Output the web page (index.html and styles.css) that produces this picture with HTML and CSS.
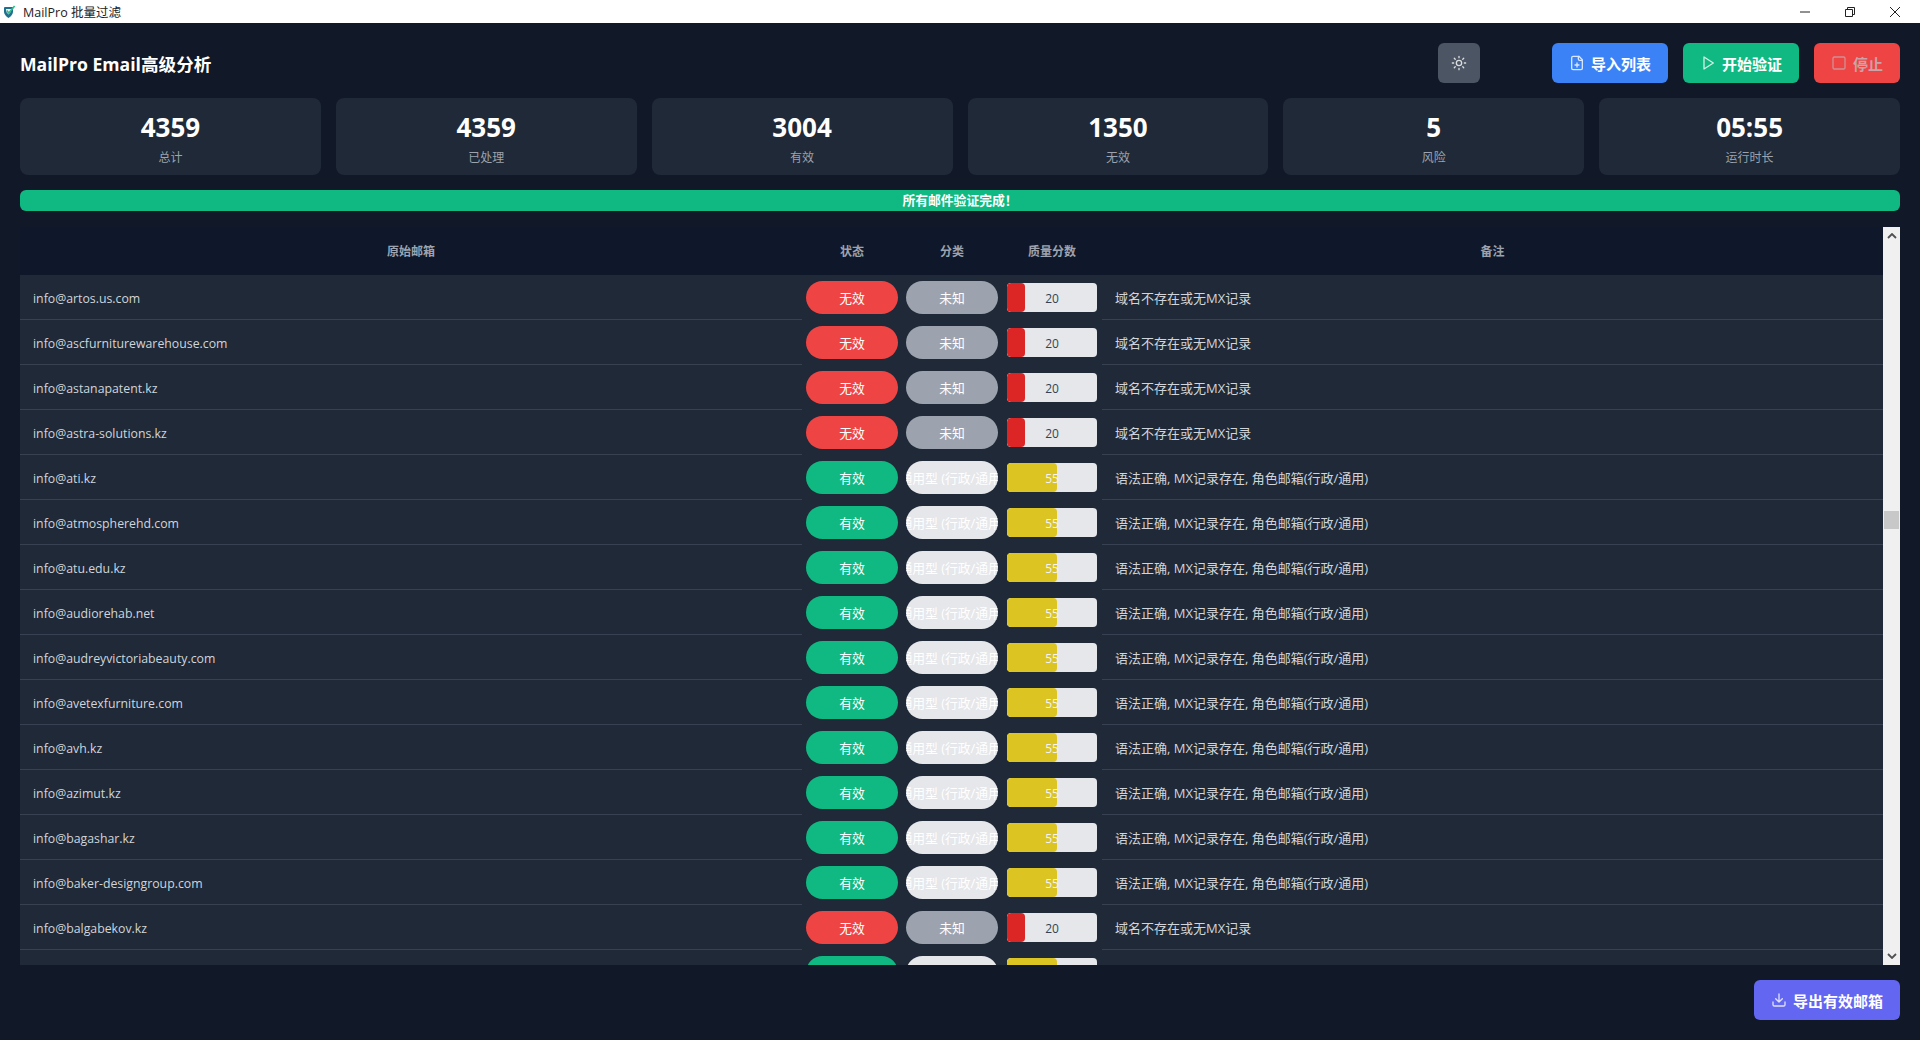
FILE: index.html
```html
<!DOCTYPE html>
<html lang="zh-CN">
<head>
    <meta charset="UTF-8">
    <title>MailPro 批量过滤</title>
    <link rel="stylesheet" href="styles.css">
</head>
<body>

    <!-- Window title bar -->
    <div class="titlebar">
        <svg class="app-icon" viewBox="0 0 14 14" width="14" height="14">
            <path d="M1 3 Q1 2 2 2 L10 2 L10 7 Q9.5 10.5 5.5 13 Q1.5 10.5 1 7 Z" fill="#1f6f8f"/>
            <path d="M3 4 L8.2 4 L7.6 7 L5.5 9.6 L3.4 7 Z" fill="#f2f8f8"/>
            <path d="M3.8 5.6 L5.8 8 L11.6 1" fill="none" stroke="#2fbf86" stroke-width="1.7"/>
        </svg>
        <span class="titlebar-text">MailPro 批量过滤</span>
        <div class="window-controls">
            <svg viewBox="0 0 12 12" width="12" height="12"><path d="M1 6 H11" stroke="#222" fill="none"/></svg>
            <svg viewBox="0 0 12 12" width="12" height="12"><path d="M1.5 3.5 H8.5 V10.5 H1.5 Z M3.5 3.5 V1.5 H10.5 V8.5 H8.5" stroke="#222" fill="none"/></svg>
            <svg viewBox="0 0 12 12" width="12" height="12"><path d="M1 1 L11 11 M11 1 L1 11" stroke="#222" fill="none"/></svg>
        </div>
    </div>

    <div class="app">
        <!-- Header -->
        <div class="header">
            <h1 class="app-title">MailPro Email高级分析</h1>
            <button class="btn btn-theme">
                <svg class="icon" viewBox="0 0 24 24"><circle cx="12" cy="12" r="4"/><path d="M12 2v2M12 20v2M4.93 4.93l1.41 1.41M17.66 17.66l1.41 1.41M2 12h2M20 12h2M6.34 17.66l-1.41 1.41M19.07 4.93l-1.41 1.41"/></svg>
            </button>
            <button class="btn btn-import">
                <svg class="icon" viewBox="0 0 24 24"><path d="M15 2H6a2 2 0 0 0-2 2v16a2 2 0 0 0 2 2h12a2 2 0 0 0 2-2V7Z"/><path d="M14 2v4a2 2 0 0 0 2 2h4"/><path d="M9 15h6M12 18v-6"/></svg>
                导入列表
            </button>
            <button class="btn btn-start">
                <svg class="icon" viewBox="0 0 24 24"><path d="M6 3l14 9-14 9V3Z"/></svg>
                开始验证
            </button>
            <button class="btn btn-stop">
                <svg class="icon" viewBox="0 0 24 24"><rect x="3" y="3" width="18" height="18" rx="2"/></svg>
                停止
            </button>
        </div>

        <!-- Stats -->
        <div class="stats">
            <div class="stat-card"><div class="stat-value">4359</div><div class="stat-label">总计</div></div>
            <div class="stat-card"><div class="stat-value">4359</div><div class="stat-label">已处理</div></div>
            <div class="stat-card"><div class="stat-value">3004</div><div class="stat-label">有效</div></div>
            <div class="stat-card"><div class="stat-value">1350</div><div class="stat-label">无效</div></div>
            <div class="stat-card"><div class="stat-value">5</div><div class="stat-label">风险</div></div>
            <div class="stat-card"><div class="stat-value">05:55</div><div class="stat-label">运行时长</div></div>
        </div>

        <div class="progress">所有邮件验证完成！</div>

        <!-- Results -->
        <div class="results">
            <div class="table-wrap">
                <table class="result-table">
                    <thead>
                        <tr>
                            <th class="col-email">原始邮箱</th>
                            <th class="col-mid">状态</th>
                            <th class="col-mid">分类</th>
                            <th class="col-mid">质量分数</th>
                            <th>备注</th>
                        </tr>
                    </thead>
                    <tbody>
                        <tr>
                            <td class="cell-email">info@artos.us.com</td>
                            <td class="cell-mid"><div class="pill pill-invalid">无效</div></td>
                            <td class="cell-mid"><div class="pill pill-unknown">未知</div></td>
                            <td class="cell-mid"><div class="score"><div class="score-fill fill-low"></div><span class="score-num">20</span></div></td>
                            <td class="cell-note">域名不存在或无MX记录</td>
                        </tr>
                        <tr>
                            <td class="cell-email">info@ascfurniturewarehouse.com</td>
                            <td class="cell-mid"><div class="pill pill-invalid">无效</div></td>
                            <td class="cell-mid"><div class="pill pill-unknown">未知</div></td>
                            <td class="cell-mid"><div class="score"><div class="score-fill fill-low"></div><span class="score-num">20</span></div></td>
                            <td class="cell-note">域名不存在或无MX记录</td>
                        </tr>
                        <tr>
                            <td class="cell-email">info@astanapatent.kz</td>
                            <td class="cell-mid"><div class="pill pill-invalid">无效</div></td>
                            <td class="cell-mid"><div class="pill pill-unknown">未知</div></td>
                            <td class="cell-mid"><div class="score"><div class="score-fill fill-low"></div><span class="score-num">20</span></div></td>
                            <td class="cell-note">域名不存在或无MX记录</td>
                        </tr>
                        <tr>
                            <td class="cell-email">info@astra-solutions.kz</td>
                            <td class="cell-mid"><div class="pill pill-invalid">无效</div></td>
                            <td class="cell-mid"><div class="pill pill-unknown">未知</div></td>
                            <td class="cell-mid"><div class="score"><div class="score-fill fill-low"></div><span class="score-num">20</span></div></td>
                            <td class="cell-note">域名不存在或无MX记录</td>
                        </tr>
                        <tr>
                            <td class="cell-email">info@ati.kz</td>
                            <td class="cell-mid"><div class="pill pill-valid">有效</div></td>
                            <td class="cell-mid"><div class="pill pill-role">通用型 (行政/通用)</div></td>
                            <td class="cell-mid"><div class="score"><div class="score-fill fill-mid"></div><span class="score-num num-light">55</span></div></td>
                            <td class="cell-note">语法正确, MX记录存在, 角色邮箱(行政/通用)</td>
                        </tr>
                        <tr>
                            <td class="cell-email">info@atmospherehd.com</td>
                            <td class="cell-mid"><div class="pill pill-valid">有效</div></td>
                            <td class="cell-mid"><div class="pill pill-role">通用型 (行政/通用)</div></td>
                            <td class="cell-mid"><div class="score"><div class="score-fill fill-mid"></div><span class="score-num num-light">55</span></div></td>
                            <td class="cell-note">语法正确, MX记录存在, 角色邮箱(行政/通用)</td>
                        </tr>
                        <tr>
                            <td class="cell-email">info@atu.edu.kz</td>
                            <td class="cell-mid"><div class="pill pill-valid">有效</div></td>
                            <td class="cell-mid"><div class="pill pill-role">通用型 (行政/通用)</div></td>
                            <td class="cell-mid"><div class="score"><div class="score-fill fill-mid"></div><span class="score-num num-light">55</span></div></td>
                            <td class="cell-note">语法正确, MX记录存在, 角色邮箱(行政/通用)</td>
                        </tr>
                        <tr>
                            <td class="cell-email">info@audiorehab.net</td>
                            <td class="cell-mid"><div class="pill pill-valid">有效</div></td>
                            <td class="cell-mid"><div class="pill pill-role">通用型 (行政/通用)</div></td>
                            <td class="cell-mid"><div class="score"><div class="score-fill fill-mid"></div><span class="score-num num-light">55</span></div></td>
                            <td class="cell-note">语法正确, MX记录存在, 角色邮箱(行政/通用)</td>
                        </tr>
                        <tr>
                            <td class="cell-email">info@audreyvictoriabeauty.com</td>
                            <td class="cell-mid"><div class="pill pill-valid">有效</div></td>
                            <td class="cell-mid"><div class="pill pill-role">通用型 (行政/通用)</div></td>
                            <td class="cell-mid"><div class="score"><div class="score-fill fill-mid"></div><span class="score-num num-light">55</span></div></td>
                            <td class="cell-note">语法正确, MX记录存在, 角色邮箱(行政/通用)</td>
                        </tr>
                        <tr>
                            <td class="cell-email">info@avetexfurniture.com</td>
                            <td class="cell-mid"><div class="pill pill-valid">有效</div></td>
                            <td class="cell-mid"><div class="pill pill-role">通用型 (行政/通用)</div></td>
                            <td class="cell-mid"><div class="score"><div class="score-fill fill-mid"></div><span class="score-num num-light">55</span></div></td>
                            <td class="cell-note">语法正确, MX记录存在, 角色邮箱(行政/通用)</td>
                        </tr>
                        <tr>
                            <td class="cell-email">info@avh.kz</td>
                            <td class="cell-mid"><div class="pill pill-valid">有效</div></td>
                            <td class="cell-mid"><div class="pill pill-role">通用型 (行政/通用)</div></td>
                            <td class="cell-mid"><div class="score"><div class="score-fill fill-mid"></div><span class="score-num num-light">55</span></div></td>
                            <td class="cell-note">语法正确, MX记录存在, 角色邮箱(行政/通用)</td>
                        </tr>
                        <tr>
                            <td class="cell-email">info@azimut.kz</td>
                            <td class="cell-mid"><div class="pill pill-valid">有效</div></td>
                            <td class="cell-mid"><div class="pill pill-role">通用型 (行政/通用)</div></td>
                            <td class="cell-mid"><div class="score"><div class="score-fill fill-mid"></div><span class="score-num num-light">55</span></div></td>
                            <td class="cell-note">语法正确, MX记录存在, 角色邮箱(行政/通用)</td>
                        </tr>
                        <tr>
                            <td class="cell-email">info@bagashar.kz</td>
                            <td class="cell-mid"><div class="pill pill-valid">有效</div></td>
                            <td class="cell-mid"><div class="pill pill-role">通用型 (行政/通用)</div></td>
                            <td class="cell-mid"><div class="score"><div class="score-fill fill-mid"></div><span class="score-num num-light">55</span></div></td>
                            <td class="cell-note">语法正确, MX记录存在, 角色邮箱(行政/通用)</td>
                        </tr>
                        <tr>
                            <td class="cell-email">info@baker-designgroup.com</td>
                            <td class="cell-mid"><div class="pill pill-valid">有效</div></td>
                            <td class="cell-mid"><div class="pill pill-role">通用型 (行政/通用)</div></td>
                            <td class="cell-mid"><div class="score"><div class="score-fill fill-mid"></div><span class="score-num num-light">55</span></div></td>
                            <td class="cell-note">语法正确, MX记录存在, 角色邮箱(行政/通用)</td>
                        </tr>
                        <tr>
                            <td class="cell-email">info@balgabekov.kz</td>
                            <td class="cell-mid"><div class="pill pill-invalid">无效</div></td>
                            <td class="cell-mid"><div class="pill pill-unknown">未知</div></td>
                            <td class="cell-mid"><div class="score"><div class="score-fill fill-low"></div><span class="score-num">20</span></div></td>
                            <td class="cell-note">域名不存在或无MX记录</td>
                        </tr>
                        <tr>
                            <td class="cell-email"></td>
                            <td class="cell-mid"><div class="pill pill-valid"></div></td>
                            <td class="cell-mid"><div class="pill pill-role"></div></td>
                            <td class="cell-mid"><div class="score"><div class="score-fill fill-mid"></div></div></td>
                            <td class="cell-note"></td>
                        </tr>
                    </tbody>
                </table>
            </div>
            <!-- Scrollbar -->
            <div class="scrollbar">
                <svg class="scroll-arrow" viewBox="0 0 10 6" width="10" height="6"><path d="M1 5 L5 1 L9 5" fill="none" stroke="#505050" stroke-width="1.8"/></svg>
                <div class="scroll-thumb"></div>
                <svg class="scroll-arrow" viewBox="0 0 10 6" width="10" height="6"><path d="M1 1 L5 5 L9 1" fill="none" stroke="#505050" stroke-width="1.8"/></svg>
            </div>
        </div>

        <!-- Footer -->
        <div class="footer">
            <button class="btn btn-export">
                <svg class="icon" viewBox="0 0 24 24"><path d="M12 3v12M7 10l5 5 5-5"/><path d="M3 15v4a2 2 0 0 0 2 2h14a2 2 0 0 0 2-2v-4"/></svg>
                导出有效邮箱
            </button>
        </div>
    </div>

</body>
</html>
```

FILE: styles.css
```css
body {
    margin: 0;
    height: 1040px;
    overflow: hidden;
    background-color: #111827;
    color: #e5e7eb;
    font-family: "Open Sans", "Noto Sans CJK SC", sans-serif;
}

/* Title bar */
.titlebar {
    display: flex;
    align-items: center;
    height: 23px;
    background-color: #fff;
    color: #222;
    font-size: 12.5px;
}

.app-icon {
    margin-left: 3px;
    margin-right: 6px;
}

.window-controls {
    display: flex;
    align-items: center;
    gap: 33px;
    margin-left: auto;
    margin-right: 19px;
}

/* Main layout */
.app {
    display: flex;
    flex-direction: column;
    padding: 20px;
}

.header {
    display: flex;
    align-items: center;
    gap: 15px;
    height: 40px;
}

.app-title {
    margin: 0 auto 0 0;
    font-size: 17.6px;
    font-weight: 700;
    color: #fff;
}

.btn {
    display: flex;
    align-items: center;
    justify-content: center;
    gap: 6px;
    height: 40px;
    border: none;
    border-radius: 6px;
    color: #fff;
    font-family: inherit;
    font-size: 15px;
    font-weight: 700;
}

.icon {
    width: 16px;
    height: 16px;
    fill: none;
    stroke: currentColor;
    stroke-width: 2;
    stroke-linecap: round;
    stroke-linejoin: round;
    opacity: 0.8;
}

.btn-theme {
    width: 42px;
    margin-right: 57px;
    background-color: #4b5563;
}

.btn-import {
    width: 116px;
    background-color: #3b82f6;
}

.btn-start {
    width: 116px;
    background-color: #10b981;
}

.btn-stop {
    width: 86px;
    background-color: #ef4444;
    color: #c9a3a8;
}

.btn-export {
    width: 146px;
    background-color: #6366f1;
}

/* Stat cards */
.stats {
    display: grid;
    grid-template-columns: repeat(6, 1fr);
    gap: 15px;
    margin-top: 15px;
}

.stat-card {
    display: flex;
    flex-direction: column;
    align-items: center;
    height: 77px;
    border-radius: 8px;
    background-color: #1f2937;
}

.stat-value {
    margin-top: 13px;
    font-size: 26px;
    line-height: 32px;
    font-weight: 700;
    color: #fff;
}

.stat-label {
    margin-top: 5px;
    font-size: 12px;
    line-height: 20px;
    color: #9ca3af;
}

.progress {
    height: 21px;
    margin-top: 15px;
    border-radius: 6px;
    background-color: #10b981;
    color: #fff;
    font-size: 12.8px;
    font-weight: 700;
    line-height: 21px;
    text-align: center;
}

/* Results table */
.results {
    display: flex;
    height: 738px;
    margin-top: 16px;
}

.table-wrap {
    flex: 1;
    overflow: hidden;
}

.result-table {
    width: 100%;
    table-layout: fixed;
    border-collapse: separate;
    border-spacing: 0;
}

.result-table th {
    height: 48px;
    padding: 0;
    background-color: #0f172a;
    color: #9ca3af;
    font-size: 12px;
    font-weight: 700;
}

.col-email {
    width: 782px;
}

.col-mid {
    width: 100px;
}

.result-table td {
    height: 44px;
    padding: 0;
    background-color: #1f2937;
    color: #d1d5db;
}

.result-table .cell-email {
    padding: 2px 0 0 13px;
    height: 42px;
    border-bottom: 1px solid #374151;
    font-size: 12.3px;
}

.result-table .cell-note {
    padding-left: 13px;
    border-bottom: 1px solid #374151;
    font-size: 13px;
}

.cell-mid {
    border-bottom: 1px solid #1f2937;
}

.pill {
    width: 92px;
    height: 33px;
    margin: 0 auto;
    overflow: hidden;
    border-radius: 17px;
    color: #fff;
    font-size: 12.8px;
    line-height: 34px;
    text-align: center;
    white-space: nowrap;
}

.pill-invalid {
    background-color: #ef4444;
}

.pill-valid {
    background-color: #10b981;
}

.pill-unknown {
    background-color: #9ca3af;
}

.pill-role {
    display: flex;
    justify-content: center;
    background-color: #e5e7eb;
}

.score {
    position: relative;
    width: 90px;
    height: 29px;
    margin: 0 auto;
    overflow: hidden;
    border-radius: 4px;
    background-color: #e5e7eb;
}

.score-fill {
    height: 100%;
    border-radius: 4px;
}

.fill-low {
    width: 18px;
    background-color: #dc2626;
}

.fill-mid {
    width: 50px;
    background-color: #dcc423;
}

/* number sits over the coloured bar */
.score-num {
    position: absolute;
    top: 0;
    left: 0;
    width: 100%;
    color: #374151;
    font-size: 12px;
    line-height: 31px;
    text-align: center;
}

.num-light {
    color: #f3f4f6;
}

/* Scrollbar */
.scrollbar {
    position: relative;
    display: flex;
    flex-direction: column;
    align-items: center;
    justify-content: space-between;
    width: 17px;
    padding: 6px 0;
    box-sizing: border-box;
    background-color: #f0f0f0;
}

.scroll-thumb {
    position: absolute;
    top: 284px;
    left: 1px;
    width: 15px;
    height: 18px;
    background-color: #c8c8c8;
}

.footer {
    display: flex;
    justify-content: flex-end;
    margin-top: 15px;
}
```
